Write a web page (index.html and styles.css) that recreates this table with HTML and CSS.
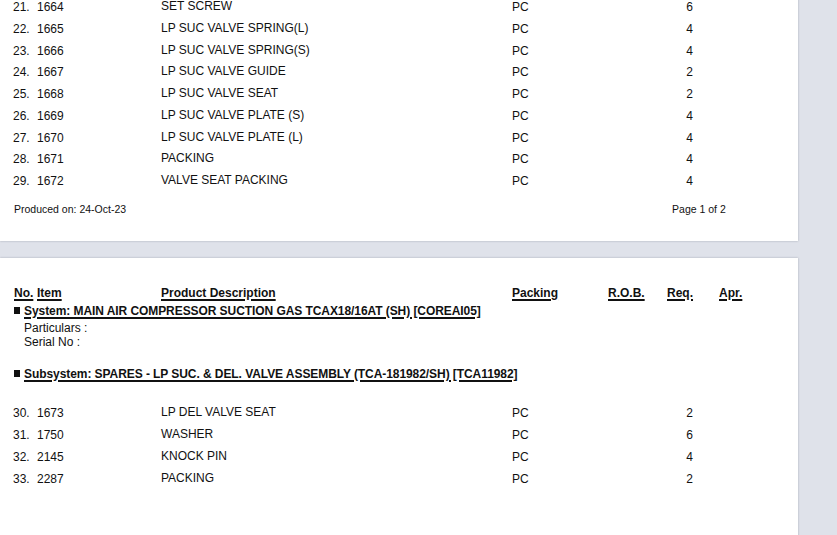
FILE: index.html
```html
<!DOCTYPE html>
<html>
<head>
<meta charset="utf-8">
<link rel="stylesheet" href="styles.css">
</head>
<body>
<div class="viewer">
  <section class="page page-first">
    <div class="rows">
      <div class="row"><span class="no">21.</span><span class="item">1664</span><span class="desc">SET SCREW</span><span class="pack">PC</span><span class="rob"></span><span class="req">6</span><span class="apr"></span></div>
      <div class="row"><span class="no">22.</span><span class="item">1665</span><span class="desc">LP SUC VALVE SPRING(L)</span><span class="pack">PC</span><span class="rob"></span><span class="req">4</span><span class="apr"></span></div>
      <div class="row"><span class="no">23.</span><span class="item">1666</span><span class="desc">LP SUC VALVE SPRING(S)</span><span class="pack">PC</span><span class="rob"></span><span class="req">4</span><span class="apr"></span></div>
      <div class="row"><span class="no">24.</span><span class="item">1667</span><span class="desc">LP SUC VALVE GUIDE</span><span class="pack">PC</span><span class="rob"></span><span class="req">2</span><span class="apr"></span></div>
      <div class="row"><span class="no">25.</span><span class="item">1668</span><span class="desc">LP SUC VALVE SEAT</span><span class="pack">PC</span><span class="rob"></span><span class="req">2</span><span class="apr"></span></div>
      <div class="row"><span class="no">26.</span><span class="item">1669</span><span class="desc">LP SUC VALVE PLATE (S)</span><span class="pack">PC</span><span class="rob"></span><span class="req">4</span><span class="apr"></span></div>
      <div class="row"><span class="no">27.</span><span class="item">1670</span><span class="desc">LP SUC VALVE PLATE (L)</span><span class="pack">PC</span><span class="rob"></span><span class="req">4</span><span class="apr"></span></div>
      <div class="row"><span class="no">28.</span><span class="item">1671</span><span class="desc">PACKING</span><span class="pack">PC</span><span class="rob"></span><span class="req">4</span><span class="apr"></span></div>
      <div class="row"><span class="no">29.</span><span class="item">1672</span><span class="desc">VALVE SEAT PACKING</span><span class="pack">PC</span><span class="rob"></span><span class="req">4</span><span class="apr"></span></div>
    </div>
    <footer class="page-footer">
      <span>Produced on: 24-Oct-23</span>
      <span class="page-num">Page 1 of 2</span>
    </footer>
  </section>

  <section class="page page-second">
    <div class="row head">
      <span class="no"><u>No.</u></span><span class="item"><u>Item</u></span><span class="desc"><u>Product Description</u></span><span class="pack"><u>Packing</u></span><span class="rob"><u>R.O.B.</u></span><span class="req"><u>Req.</u></span><span class="apr"><u>Apr.</u></span>
    </div>
    <div class="group-title system"><span class="bullet"></span><u>System: MAIN AIR COMPRESSOR SUCTION GAS TCAX18/16AT (SH) [COREAI05]</u></div>
    <div class="particulars">
      <div>Particulars :</div>
      <div>Serial No :</div>
    </div>
    <div class="group-title subsystem"><span class="bullet"></span><u>Subsystem: SPARES - LP SUC. &amp; DEL. VALVE ASSEMBLY (TCA-181982/SH) [TCA11982]</u></div>
    <div class="rows rows-second">
      <div class="row"><span class="no">30.</span><span class="item">1673</span><span class="desc">LP DEL VALVE SEAT</span><span class="pack">PC</span><span class="rob"></span><span class="req">2</span><span class="apr"></span></div>
      <div class="row"><span class="no">31.</span><span class="item">1750</span><span class="desc">WASHER</span><span class="pack">PC</span><span class="rob"></span><span class="req">6</span><span class="apr"></span></div>
      <div class="row"><span class="no">32.</span><span class="item">2145</span><span class="desc">KNOCK PIN</span><span class="pack">PC</span><span class="rob"></span><span class="req">4</span><span class="apr"></span></div>
      <div class="row"><span class="no">33.</span><span class="item">2287</span><span class="desc">PACKING</span><span class="pack">PC</span><span class="rob"></span><span class="req">2</span><span class="apr"></span></div>
    </div>
  </section>
</div>
</body>
</html>
```

FILE: styles.css
```css
html, body {
  margin: 0;
  padding: 0;
  height: 100%;
  overflow: hidden;
}
body {
  background: #dfe2ea;
  font-family: "Liberation Sans", Arial, sans-serif;
  color: #111;
  font-size: 12px;
}
.viewer {
  width: 798px;
  display: flex;
  flex-direction: column;
  gap: 17px;
}
.page {
  background: #fff;
  box-shadow: 0 0 2px rgba(60, 64, 80, 0.35);
  padding-left: 13px;
}
.page-first {
  margin-top: -3px;
  padding-bottom: 25px;
}
.page-second {
  padding-top: 28px;
  height: 400px;
}
.row {
  display: grid;
  grid-template-columns: 24px 124px 351px 96px 59px 26px 1fr;
  height: 21.75px;
  line-height: 21.75px;
  white-space: nowrap;
}
.row .desc {
  margin-top: -1px;
}
.row .req {
  text-align: right;
}
.rows-second .row {
  height: 22px;
  line-height: 22px;
}
.row.head {
  height: 14px;
  line-height: 14px;
  font-weight: bold;
}
.row.head .no {
  padding-left: 1px;
}
.row.head .desc {
  margin-top: 0;
}
.row.head .req {
  text-align: left;
}
.row.head .apr {
  padding-left: 26px;
}
u {
  text-decoration-thickness: 1.7px;
  text-underline-offset: 1.5px;
}
.page-footer {
  margin-top: 9px;
  display: flex;
  font-size: 10.5px;
  line-height: 14px;
  padding-left: 1px;
}
.page-num {
  margin-left: 546px;
}
.group-title {
  display: flex;
  align-items: center;
  gap: 4px;
  font-weight: bold;
  line-height: 14px;
  height: 14px;
  padding-left: 1px;
  letter-spacing: -0.07px;
}
.group-title.system {
  margin-top: 4px;
}
.group-title.subsystem {
  margin-top: 18px;
}
.bullet {
  width: 6px;
  height: 7px;
  background: #111;
  display: inline-block;
}
.particulars {
  margin-top: 3px;
  padding-left: 11px;
  line-height: 14px;
}
.rows-second {
  margin-top: 21px;
}
```
